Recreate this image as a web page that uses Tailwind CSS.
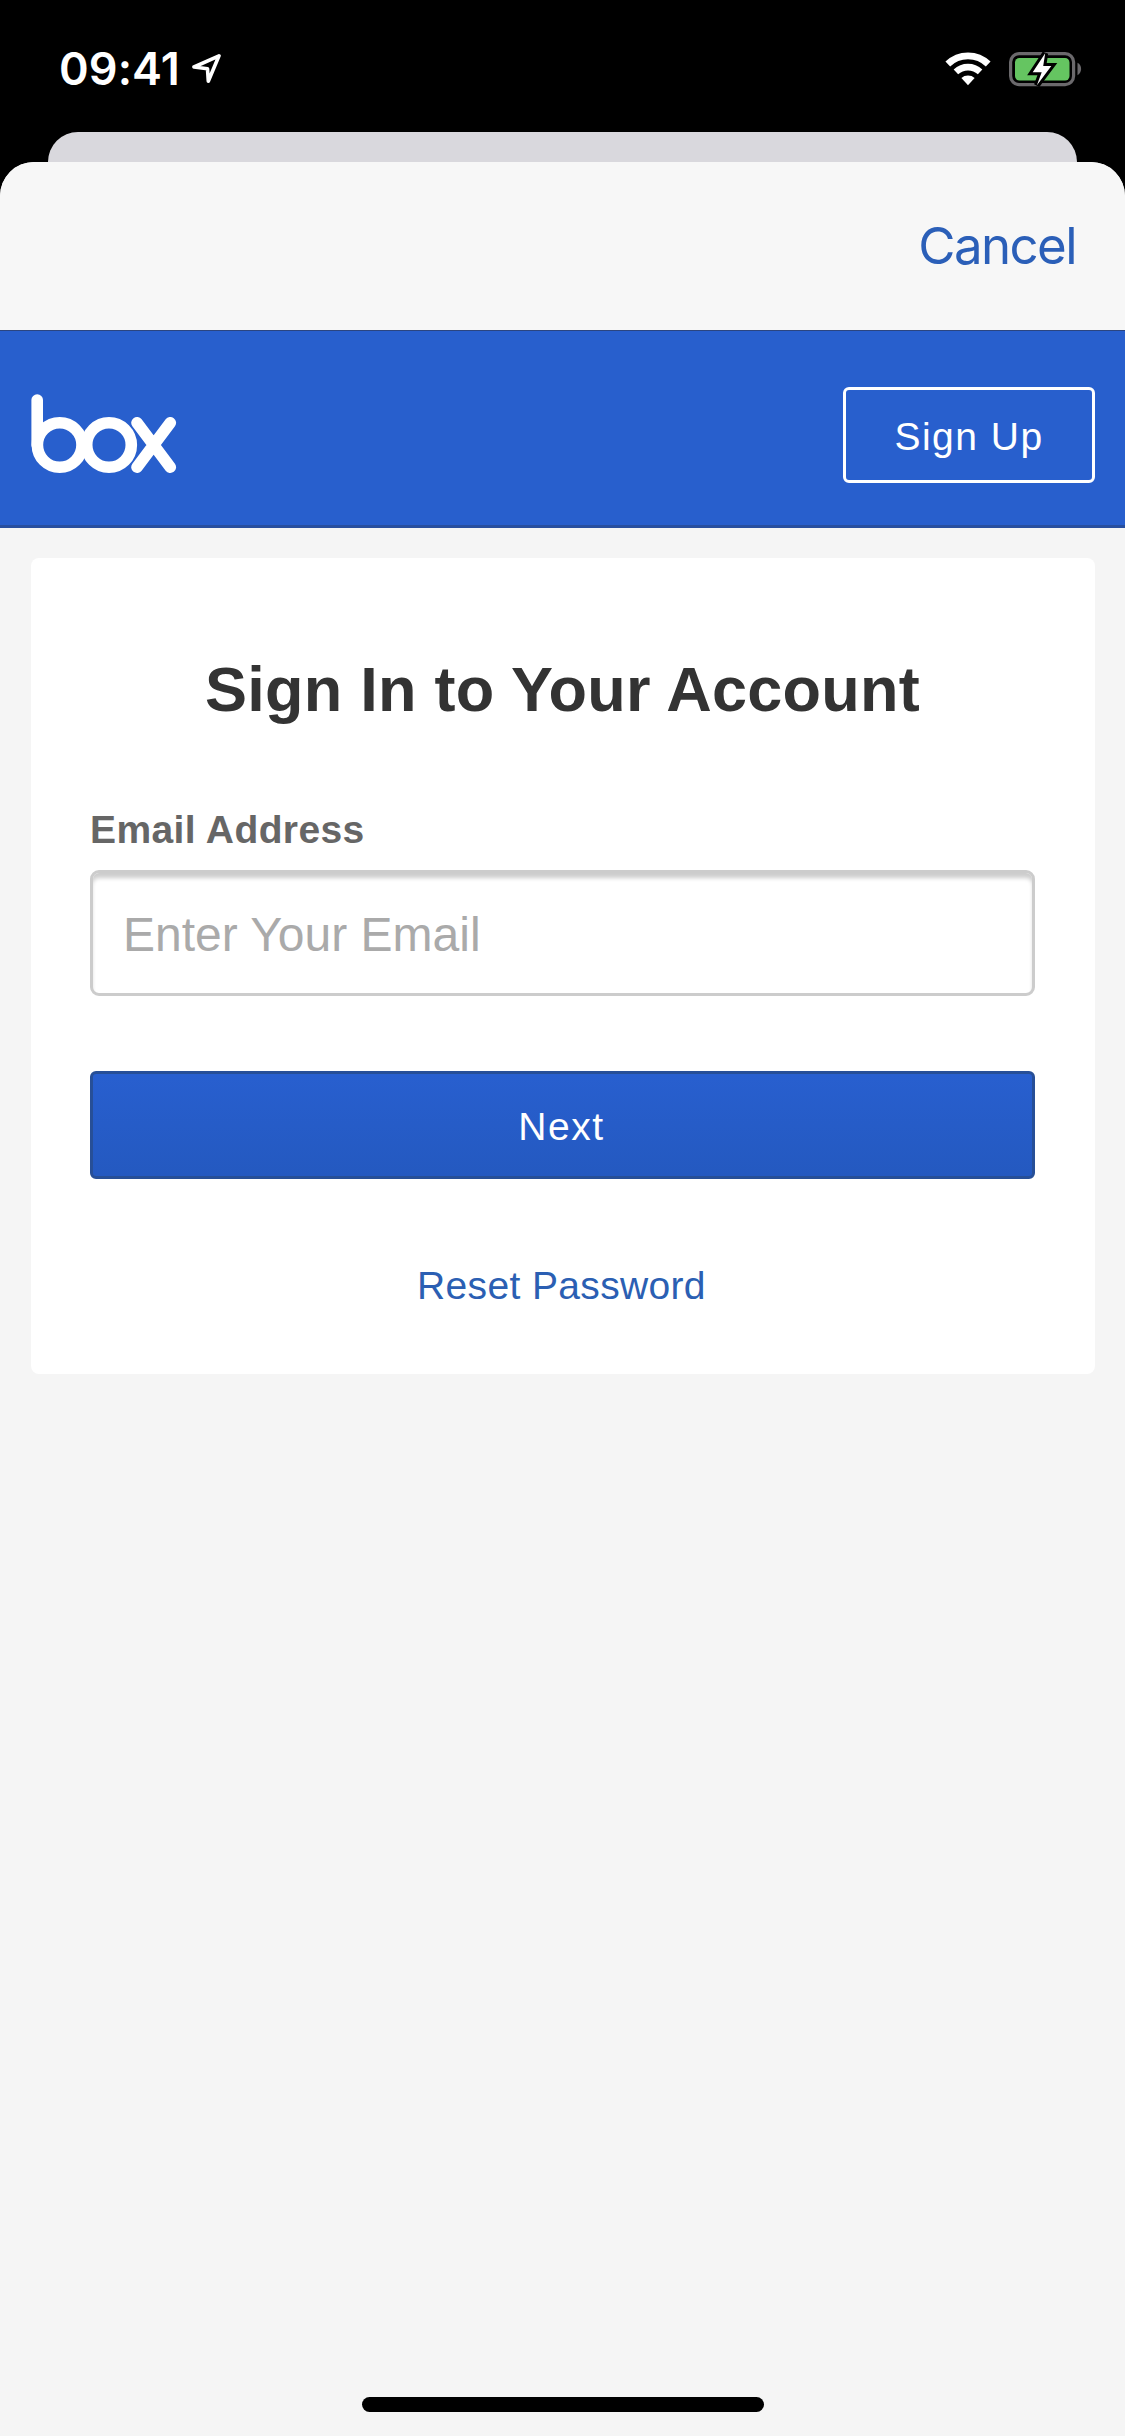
<!DOCTYPE html>
<html lang="en">
  <head>
    <meta charset="UTF-8" />
    <title>Box | Sign In</title>
    <script src="https://cdn.jsdelivr.net/npm/@tailwindcss/browser@4"></script>
  </head>
  <body class="w-[1125px] h-[2436px] bg-black overflow-hidden flex flex-col font-['Liberation_Sans',Arial,sans-serif]">
    <!-- Status bar -->
    <div class="h-[132px] shrink-0 flex items-start justify-between pl-[59px] pr-[42px]">
      <div class="flex items-start text-white">
        <span class="w-[133px] mt-[42px] text-[45px] leading-[54px] font-semibold tracking-[0.1px] font-['Inter',sans-serif]">09:41</span>
        <svg class="mt-[50px]" width="30" height="36" viewBox="0 0 30 36" fill="none" stroke="currentColor" stroke-width="3.6" stroke-linejoin="round">
          <path d="M27 5.8 L2 17 L15.5 18.7 L16.3 31.2 Z" />
        </svg>
      </div>
      <div class="flex items-start mt-[50px]">
        <svg class="mr-[17px]" width="48" height="38" viewBox="0 0 48 38" fill="none" stroke="#fff">
          <path d="M3.8 14 A29 29 0 0 1 44.2 14" stroke-width="6.8" />
          <path d="M11.9 21.9 A17.8 17.8 0 0 1 36.1 21.9" stroke-width="6.6" />
          <path d="M24 35.2 L17.4 28 A10 10 0 0 1 30.6 28 Z" fill="#fff" stroke="none" />
        </svg>
        <svg width="74" height="38" viewBox="0 0 74 38">
          <rect x="1.6" y="3.6" width="63" height="31" rx="8.5" fill="none" stroke="#6b696c" stroke-width="3.2" />
          <path d="M68.5 12.8 C73.3 15.2 73.3 22.8 68.5 25.2 Z" fill="#6b696c" />
          <rect x="6" y="8" width="54.5" height="22.5" rx="4.5" fill="#65c561" />
          <path d="M36.2 3.3 L23.7 22.3 L32.7 22.3 L27.9 35.2 L42.3 16 L34.2 16 Z" fill="#fff" stroke="#000" stroke-width="6" paint-order="stroke" />
        </svg>
      </div>
    </div>

    <!-- Page behind the sheet -->
    <div class="h-[30px] shrink-0 mx-[48px] bg-[#d9d8dd] rounded-t-[30px]"></div>

    <!-- Sheet -->
    <div class="flex-1 flex flex-col bg-[#f5f5f5] rounded-t-[34px] overflow-hidden">
      <div class="h-[168px] shrink-0 bg-[#f7f7f7] flex items-center justify-end pr-[49px]">
        <button class="text-[51px] leading-[60px] tracking-[-1.6px] text-[#2b5fb8] font-['Inter',sans-serif]">Cancel</button>
      </div>

      <header class="h-[198px] shrink-0 bg-[#285fcd] border-t border-t-[#2b4580] border-b-[3px] border-b-[#284f9f] flex items-start justify-between pl-[30px] pr-[30px]">
        <svg class="mt-[62px]" width="148" height="82" viewBox="30 393 148 82" fill="none" stroke="#fff" stroke-width="11.6" stroke-linecap="round">
          <path d="M37.2 400 V445" />
          <circle cx="59.7" cy="445" r="22.3" />
          <circle cx="109" cy="445" r="22.3" />
          <path d="M137 422.8 L170.3 467.2 M170.3 422.8 L137 467.2" />
        </svg>
        <button class="w-[252px] h-[96px] mt-[56px] pt-[2px] border-[3px] border-white rounded-[6px] text-white text-[39px] leading-[45px] tracking-[1.5px]">Sign Up</button>
      </header>

      <main class="mt-[30px] ml-[31px] mr-[30px] h-[816px] bg-white rounded-[8px] pl-[59px] pr-[60px] pt-[95px]">
        <h1 class="text-center text-[63px] leading-[72px] tracking-[0.25px] font-bold text-[#333]">Sign In to Your Account</h1>
        <form>
          <label for="login" class="block mt-[82px] text-[39px] leading-[45px] tracking-[0.4px] font-bold text-[#666]">Email Address</label>
          <input id="login" type="email" placeholder="Enter Your Email"
            class="block w-full h-[126px] mt-[18px] px-[30px] pt-[2px] bg-white border-[3px] border-[#ccc] rounded-[9px] text-[48px] placeholder:text-[#aaa] shadow-[inset_0_6px_4px_-1px_rgba(0,0,0,0.2)]" />
          <button type="submit"
            class="block w-full h-[108px] mt-[75px] pt-[2px] pr-[2px] border-[3px] border-[#274f97] rounded-[6px] bg-linear-to-b from-[#285fcf] to-[#2459c0] text-white text-[39px] leading-[45px] tracking-[1.6px]">Next</button>
        </form>
        <a href="#" class="block mt-[84px] pr-[2px] text-center text-[39px] leading-[45px] tracking-[0.35px] text-[#2b5fb3]">Reset Password</a>
      </main>

      <!-- Home indicator -->
      <div class="mt-auto mb-[24px] mx-auto w-[402px] h-[15px] rounded-full bg-black"></div>
    </div>
  </body>
</html>
